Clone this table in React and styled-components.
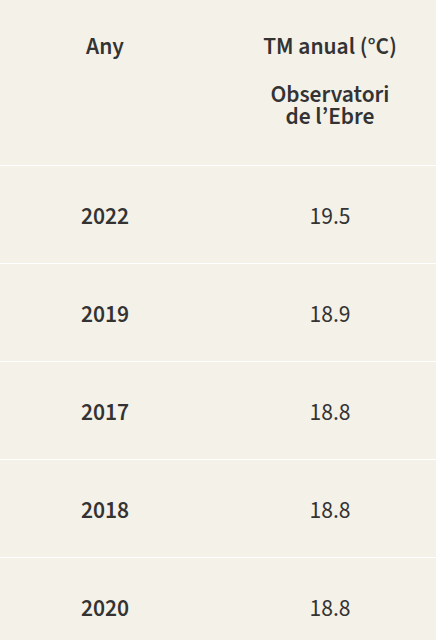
import styled, { createGlobalStyle } from 'styled-components';

const GlobalStyle = createGlobalStyle`
  html, body {
    margin: 0;
    padding: 0;
    background: #f4f1e9;
  }
  body {
    font-family: "Source Sans Pro", "Source Sans 3", Lato, "Noto Sans", sans-serif;
    color: #333333;
  }
`;

const rows = [
  { year: '2022', temp: '19.5' },
  { year: '2019', temp: '18.9' },
  { year: '2017', temp: '18.8' },
  { year: '2018', temp: '18.8' },
  { year: '2020', temp: '18.8' },
];

const App = () => {
  return (
    <>
      <GlobalStyle />
      <Table>
        <HeaderRow>
          <HeadCell>Any</HeadCell>
          <HeadCell $right>
            <HeadLine>TM anual (°C)</HeadLine>
            <SubHead>
              Observatori
              <br />
              de l’Ebre
            </SubHead>
          </HeadCell>
        </HeaderRow>
        {rows.map((row) => (
          <Row key={row.year}>
            <YearCell>{row.year}</YearCell>
            <ValueCell>{row.temp}</ValueCell>
          </Row>
        ))}
      </Table>
    </>
  );
};

const Table = styled.div`
  width: 436px;
  display: flex;
  flex-direction: column;
`;

const HeaderRow = styled.div`
  display: grid;
  grid-template-columns: 210px 1fr;
  height: 166px;
  border-bottom: 1.5px solid #ffffff;
  box-sizing: border-box;
  padding-top: 33px;
`;

const HeadCell = styled.div`
  text-align: center;
  font-size: 23.5px;
  font-weight: 600;
  line-height: 28px;
  padding-left: ${(p) => (p.$right ? '14px' : '0')};
`;

const HeadLine = styled.div``;

const SubHead = styled.div`
  margin-top: 23px;
  line-height: 22px;
`;

const Row = styled.div`
  display: grid;
  grid-template-columns: 210px 1fr;
  align-items: center;
  height: 98px;
  padding-top: 4px;
  border-bottom: 1px solid #ffffff;
  box-sizing: border-box;
`;

const YearCell = styled.div`
  text-align: center;
  font-size: 23.5px;
  font-weight: 600;
`;

const ValueCell = styled.div`
  text-align: center;
  font-size: 23.5px;
  font-weight: 400;
  padding-left: 14px;
`;

export default App;
